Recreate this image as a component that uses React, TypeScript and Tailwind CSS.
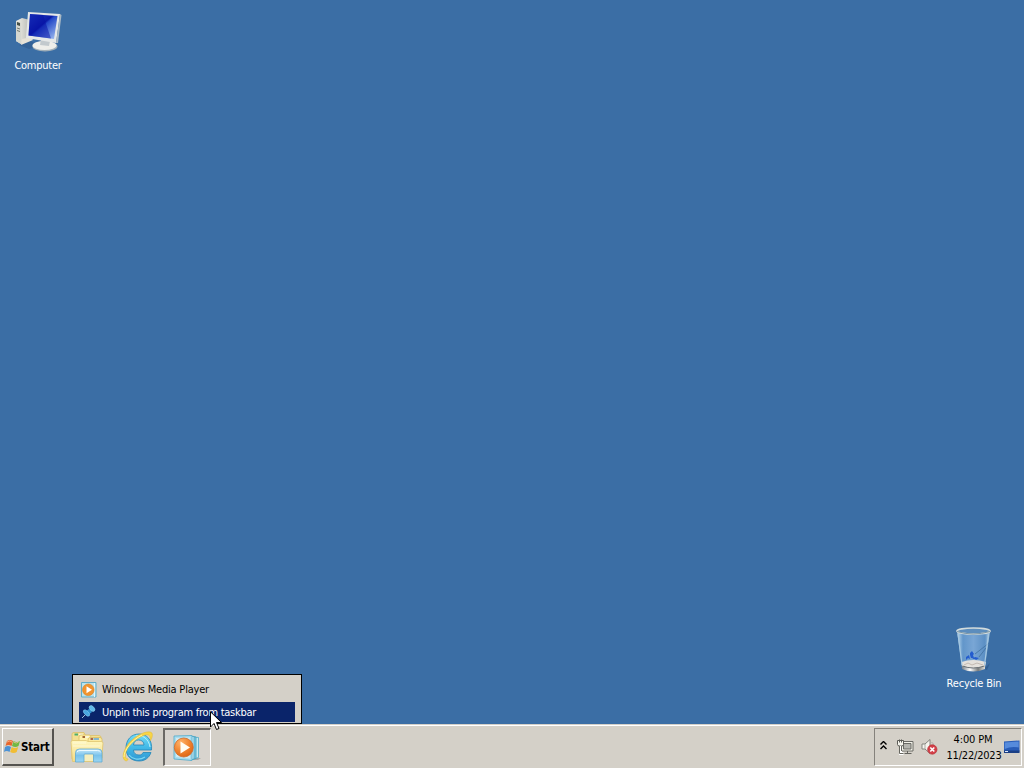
import React from "react";

function ComputerIcon() {
  return (
    <svg width="48" height="46" viewBox="0 0 48 46" className="block">
      <defs>
        <linearGradient id="screen" x1="0" y1="0" x2="1" y2="1">
          <stop offset="0" stopColor="#2548c8" />
          <stop offset=".45" stopColor="#0a1aa8" />
          <stop offset=".5" stopColor="#2449c8" />
          <stop offset="1" stopColor="#a9c6f4" />
        </linearGradient>
        <linearGradient id="tower" x1="0" x2="1">
          <stop offset="0" stopColor="#f2f1e8" />
          <stop offset="1" stopColor="#b7b9b5" />
        </linearGradient>
      </defs>
      <path d="M5 38 L15 42 L25 39 L17 34Z" fill="#2b568a" opacity=".5" />
      <path d="M2 14 L8 11 L16 13 V33 L7 37 L2 34Z" fill="url(#tower)" />
      <path d="M2 14 L7 16 V37 L2 34Z" fill="#d5d7d0" />
      <path d="M3 15l3 1v3l-3-1z" fill="#465047" />
      <path d="M3 21l3 1M3 23.500l3 1" stroke="#73796f" />
      <path d="M8 32l9-2 2 3-12 5z" fill="#e6e2d7" />
      <ellipse cx="31" cy="39.500" rx="12.500" ry="5" fill="#9faeb8" />
      <ellipse cx="30.500" cy="38.500" rx="12" ry="4.500" fill="#eeeeea" />
      <path d="M27 32 L36 34 L35 39 L26 38Z" fill="#c2c9cd" />
      <path d="M14 5 L46 7 L42 36 L12 31Z" fill="#e5e8e8" />
      <path d="M46 7 L47.500 8 L44 36 L42 36Z" fill="#a9b8c4" />
      <path d="M16 7 L43.500 9 L40 32 L14.500 28.500Z" fill="url(#screen)" />
      <path d="M16 7 L29 8 L37 31.500 L14.500 28.500Z" fill="#0510a6" opacity=".5" />
    </svg>
  );
}

function RecycleIcon() {
  return (
    <svg width="38" height="46" viewBox="0 0 38 46" className="block">
      <defs>
        <linearGradient id="glass" x1="0" x2="1">
          <stop offset="0" stopColor="#b9d8ed" />
          <stop offset=".18" stopColor="#6296ca" />
          <stop offset=".5" stopColor="#79a6d5" />
          <stop offset=".85" stopColor="#5b8fc4" />
          <stop offset="1" stopColor="#b4d3e8" />
        </linearGradient>
        <linearGradient id="metal" x1="0" x2="1">
          <stop offset="0" stopColor="#77818a" />
          <stop offset=".35" stopColor="#ffffff" />
          <stop offset=".7" stopColor="#777b7b" />
          <stop offset="1" stopColor="#e0dfda" />
        </linearGradient>
      </defs>
      <path d="M29 43 L35 37 L32 44Z" fill="#254e7e" opacity=".5" />
      <path d="M2 5 L7 41 Q18 47 30 41 L35 5Z" fill="url(#glass)" />
      <path d="M34 17 L20 28 M31 22 L24 31" stroke="#41719f" strokeWidth=".8" />
      <path d="M15 27l2-2 2 3-1 1 1 3h-3l-1-3zM11 31l3-2 1 4-2-1-2 2zM20 31l4 1-3 2-1-1-3 0z" fill="#245dce" />
      <path d="M6.500 36 Q18 32 31 36 L30 41 Q18 45 7 41Z" fill="#e4e1dc" />
      <path d="M9 39l4-2 4 2 5-2 6 2" stroke="#c3bab2" fill="none" />
      <path d="M7 40 Q18 44 30 40 L30 43 Q18 48 7 43Z" fill="url(#metal)" />
      <path d="M7.500 40 Q18 44 29.500 40" stroke="#676e73" fill="none" />
      <path d="M3 8l4 31M33.500 8l-4 31" stroke="#a5c7e0" strokeWidth="1.200" />
      <ellipse cx="18.500" cy="5" rx="16.500" ry="3" fill="#5c8dbd" stroke="#d2dbdc" strokeWidth="1.700" />
      <path d="M2 5.500 Q18 10.500 35 5.500" stroke="#7b97a8" fill="none" />
    </svg>
  );
}

function FolderIcon() {
  return (
    <svg width="34" height="34" viewBox="0 0 34 34" className="block">
      <defs>
        <linearGradient id="folder" x2="0" y2="1">
          <stop stopColor="#fff7be" />
          <stop offset="1" stopColor="#f3da86" />
        </linearGradient>
        <linearGradient id="holder" x2="0" y2="1">
          <stop stopColor="#c9e9fa" />
          <stop offset=".5" stopColor="#79c2eb" />
          <stop offset="1" stopColor="#9ad6f3" />
        </linearGradient>
      </defs>
      <path d="M2 3q0-1.500 2-1.500h10l1.500 3H29q2 0 2 2V28H2z" fill="#f3df91" stroke="#dcc067" strokeWidth=".8" />
      <path d="M4.500 3.500H8" stroke="#4fae6c" strokeWidth="2" />
      <path d="M9 3.500h4" stroke="#f8f8e3" strokeWidth="1.600" />
      <path d="M9 6q0-2 2-2h9l1.500 3H31v20H9z" fill="#fff1a8" stroke="#d9bd62" strokeWidth=".8" />
      <path d="M12.500 6H15" stroke="#a06635" strokeWidth="2" />
      <path d="M15.500 6H19" stroke="#f8f8e9" strokeWidth="1.600" />
      <path d="M18 9q0-2.500 2-2.500h10q2 0 2 2V27H18z" fill="#fbea9f" stroke="#d9bd62" strokeWidth=".8" />
      <path d="M20.500 8H23" stroke="#9d5545" strokeWidth="1.800" />
      <path d="M23.500 8H29" stroke="#76b1d4" strokeWidth="1.800" />
      <path d="M1 11q0-1.500 2-1.500h13l2 1h13q2 0 2 1.500l-1.500 18.500H2.500z" fill="url(#folder)" stroke="#e0c570" strokeWidth=".8" />
      <path d="M3 12h13M3 15h27" stroke="#fffbe0" opacity=".8" />
      <path d="M14 23h9v7h-9z" fill="#f5eebe" />
      <path d="M5.500 31V21.500q0-3.500 4-3.500H28q4 0 4 3.500V31h-8.500v-7q0-1-1-1H15q-1 0-1 1v7z" fill="url(#holder)" stroke="#62a9d2" strokeWidth=".8" />
      <path d="M7 21q1-1.500 3-1.500h17.500q2 0 3 1.500" fill="none" stroke="#edfaff" />
    </svg>
  );
}

function ExplorerIcon() {
  return (
    <svg width="32" height="32" viewBox="0 0 32 32" className="block">
      <defs>
        <linearGradient id="ie" x2="0" y2="1">
          <stop stopColor="#75ddf6" />
          <stop offset=".5" stopColor="#42b9e7" />
          <stop offset="1" stopColor="#3197d3" />
        </linearGradient>
      </defs>
      <path
        fillRule="evenodd"
        d="M29.500 19 C30.500 9 25 3 17 3 C9 3 4 9 4 17 C4 25 9 30 17 30 C23 30 27 27 29 21.500 H21 C20 23.500 19 24 17 24 C13.500 24 11.500 22 11.500 19Z M11.500 14 C12 10.500 13.500 9 16.500 9 C20 9 22 11 22 14Z"
        fill="url(#ie)"
        stroke="#2387b8"
        strokeWidth=".8"
      />
      <path d="M7 24 C10 28 17 30 23 26" fill="none" stroke="#7cd8f0" strokeWidth="1.200" />
      <path d="M14 5 C20 3 27 8 28 16" fill="none" stroke="#b7f0fc" />
      <path d="M4 30 C-2 28 2 16 10 9 C18 2 27-1 30 2 C31 4 30 8 28 10 C29 5 27 3 23 4 C17 6 10 11 6 17 C3 22 2 27 6 28 C6 29 5 30 4 30Z" fill="#f7d547" stroke="#dfb127" strokeWidth=".4" />
      <path d="M2 26 C2 19 10 9 20 4" fill="none" stroke="#fff3a0" />
    </svg>
  );
}

function PlayerIcon() {
  return (
    <svg width="29" height="28" viewBox="0 0 29 28" className="block">
      <defs>
        <radialGradient id="orange" cx=".35" cy=".25" r=".9">
          <stop stopColor="#ffb36a" />
          <stop offset=".5" stopColor="#f0842f" />
          <stop offset="1" stopColor="#d85c0c" />
        </radialGradient>
      </defs>
      <path d="M20 24h8l-3 2H12z" fill="#a7aaa8" />
      <path d="M20 3l5.500.5v20L20 25z" fill="#c7edf3" stroke="#50a9c7" strokeWidth=".8" />
      <path d="M19 2.500l4 .5v21.500l-4 1z" fill="#83cce2" stroke="#3f9dbd" strokeWidth=".8" />
      <path d="M17 2l4 .5v22.500l-4 1z" fill="#ccecf5" stroke="#43a0c2" strokeWidth=".8" />
      <path d="M1 2l18-.5v25L1 25z" fill="#a8dced" stroke="#52aaca" strokeWidth=".8" />
      <path d="M3 4l14-.5v21L3 23z" fill="#cdeaf2" />
      <circle cx="10.800" cy="13.500" r="9.500" fill="url(#orange)" stroke="#ce6b2b" strokeWidth=".8" />
      <path d="M7.500 7.500l9.500 6-9.500 6z" fill="#fffdf5" />
    </svg>
  );
}

function SmallPlayerIcon() {
  return (
    <svg width="16" height="16" viewBox="0 0 16 16" className="block">
      <path d="M.5.500h14.500v14.500H.5z" fill="#bae3ee" stroke="#60acc9" />
      <path d="M13.500 1v14" stroke="#dff5fa" />
      <circle cx="7.300" cy="7.800" r="5.800" fill="#f2942f" stroke="#d9801f" strokeWidth=".6" />
      <path d="M5.500 4.300l5.500 3.500-5.500 3.500z" fill="#fff" />
    </svg>
  );
}

function PinIcon() {
  return (
    <svg width="16" height="16" viewBox="0 0 16 16" className="block">
      <path d="M4.500 10.500l-3.500 3.500" stroke="#a4bfd5" />
      <path d="M8 5l3 3-4 3-3-3z" fill="#3396d5" />
      <ellipse cx="5.500" cy="9" rx="2" ry="4" transform="rotate(-45 5.500 9)" fill="#4aa6df" stroke="#8cd0f2" strokeWidth=".5" />
      <path d="M7 7l3-3 2 2-3 3z" fill="#2e8ecd" />
      <ellipse cx="11" cy="4.500" rx="2.200" ry="3.400" transform="rotate(-45 11 4.500)" fill="#63b8e8" stroke="#99daf5" strokeWidth=".5" />
    </svg>
  );
}

function WindowsIcon() {
  return (
    <svg width="17" height="16" viewBox="0 0 17 16" className="block">
      <path d="M3 2q3-2 6 0L7.500 7q-3-2-6 0z" fill="#e7652c" />
      <path d="M9.500 2q3 2 6.500 0l-1.500 5q-3 2-6.500 0z" fill="#71b944" />
      <path d="M1 8q3-2 6 0l-1.500 5q-3-2-5.500 0z" fill="#4c92d5" />
      <path d="M7.700 8q3 2 6.500 0l-1.500 5q-3 2-6.500 0z" fill="#f1bd34" />
      <path d="M3 3q3-2 5 0M9.500 3q3 2 5 0" stroke="#ffc89e" strokeWidth=".7" fill="none" />
    </svg>
  );
}

function NetworkIcon() {
  return (
    <svg width="17" height="16" viewBox="0 0 17 16" className="block">
      <path d="M4.500 2.500h11.500v9.500H4.500z" fill="#f4f3ea" stroke="#6a6a65" />
      <path d="M6.500 4.500h7.500v5.500H6.500z" fill="#b5b5af" stroke="#6a6a65" />
      <path d="M7.500 14.500h7M10.500 12v2" stroke="#62625d" />
      <path d="M.5 1.500h6v4q0 1.500-2 1.500h-2Q.5 7 .5 5.500z" fill="#f6f5ed" stroke="#5b5b56" />
      <path d="M2.500.500v3M4.500.500v3" stroke="#5b5b56" />
      <path d="M3.500 7v7.500h3" stroke="#fff" strokeWidth="3" fill="none" />
      <path d="M2.500 7v7.500h4M4.500 7v5" stroke="#66665f" fill="none" />
    </svg>
  );
}

function SoundIcon() {
  return (
    <svg width="17" height="16" viewBox="0 0 17 16" className="block">
      <path d="M1 5h3l5-4.500v14l-5-4.500H1z" fill="#f5f4ee" stroke="#85857f" />
      <path d="M4 5v5" stroke="#aaa9a2" />
      <path d="M10.500 3q2 1 2 4" stroke="#aaa" fill="none" />
      <circle cx="11.300" cy="10.500" r="4.700" fill="#d34049" stroke="#b5292d" strokeWidth=".6" />
      <path d="M9.300 8.500l4 4m0-4l-4 4" stroke="#fff" strokeWidth="1.600" />
    </svg>
  );
}

function DesktopIcon() {
  return (
    <svg width="16" height="16" viewBox="0 0 16 16" className="block shrink-0">
      <path d="M0 2.500l15.500-1v11H0z" fill="#285cb7" />
      <path d="M.7 3.500l14-1v6Q7 7 .7 10z" fill="#568bdc" />
      <path d="M0 11.500h15.500v2.500H0z" fill="#1b3f85" />
      <path d="M1 12.500h3" stroke="#dce9ff" />
    </svg>
  );
}

function Cursor() {
  return (
    <svg width="13" height="20" viewBox="0 0 13 20" className="block">
      <path d="M.5.800V16L4 12.500l2.500 6 2.500-1-2.500-6h5z" fill="#fff" stroke="#000" />
    </svg>
  );
}

export default function App() {
  return (
    <div className="relative flex h-screen w-full flex-col overflow-hidden bg-[#3b6ea5] font-['DejaVu_Sans_Condensed','DejaVu_Sans',sans-serif] text-[11px] leading-[14px] text-black select-none">
      <main className="flex flex-1 flex-col justify-between text-white">
        <div className="flex w-[76px] flex-col items-center pt-[7px]">
          <ComputerIcon />
          <span className="mt-[6px] whitespace-nowrap tracking-[-0.25px]">Computer</span>
        </div>
        <div className="mr-[10px] mb-[33px] flex w-[80px] flex-col items-center self-end">
          <RecycleIcon />
          <span className="mt-[5px] whitespace-nowrap tracking-[-0.2px]">Recycle Bin</span>
        </div>
      </main>
      <footer className="flex h-[44px] shrink-0 items-start border-t border-[#d4d0c8] bg-[#d4d0c8]">
        <div className="flex h-[43px] w-full items-start border-t border-white pt-[2px]">
          <button className="ml-[2px] flex h-[38px] w-[52px] items-center border-t border-r-2 border-b-2 border-l border-t-white border-r-[#55534f] border-b-[#55534f] border-l-white pl-px text-[11.5px] font-bold">
            <WindowsIcon />
            <span className="pt-px tracking-[-0.2px]">Start</span>
          </button>
          <div className="ml-[16px] mt-[3px]"><FolderIcon /></div>
          <div className="ml-[18px] mt-[3px]"><ExplorerIcon /></div>
          <div className="ml-[9px] flex h-[38px] w-[48px] items-center border-t-2 border-r border-b border-l-2 border-t-[#6b6965] border-r-white border-b-white border-l-[#6b6965] bg-[#d8d4ce] pl-[8px] pt-px">
            <PlayerIcon />
          </div>
          <div className="mr-[2px] ml-auto flex h-[38px] w-[148px] items-center border border-t-[#85827c] border-r-white border-b-white border-l-[#85827c] pl-[5px]">
            <svg width="7" height="9" viewBox="0 0 7 9" className="-mt-[3px]">
              <path d="M.5 3.500l3-3 3 3M.5 8l3-3 3 3" stroke="#000" strokeWidth="1.400" fill="none" />
            </svg>
            <div className="ml-[10px]"><NetworkIcon /></div>
            <div className="ml-[7px]"><SoundIcon /></div>
            <div className="ml-[6px] flex w-[60px] flex-col items-center pt-px leading-[16px] whitespace-nowrap">
              <span className="-ml-[2px] tracking-[-0.15px]">4:00 PM</span>
              <span className="tracking-[-0.2px]">11/22/2023</span>
            </div>
            <DesktopIcon />
          </div>
        </div>
      </footer>

      <div className="absolute top-[674px] left-[72px] h-[50px] w-[230px] border border-black bg-[#d4d0c8] pt-[3px] pr-[6px] pl-[6px]">
        <div className="flex h-[24px] items-center pb-px pl-[2px]">
          <SmallPlayerIcon />
          <span className="ml-[5px] whitespace-nowrap tracking-[-0.2px]">Windows Media Player</span>
        </div>
        <div className="flex h-[20px] w-[216px] items-center bg-[#0a246a] pl-[2px] text-white">
          <PinIcon />
          <span className="ml-[5px] pt-px whitespace-nowrap tracking-[-0.25px]">Unpin this program from taskbar</span>
        </div>
      </div>
      <div className="absolute top-[711px] left-[210px]"><Cursor /></div>
    </div>
  );
}
